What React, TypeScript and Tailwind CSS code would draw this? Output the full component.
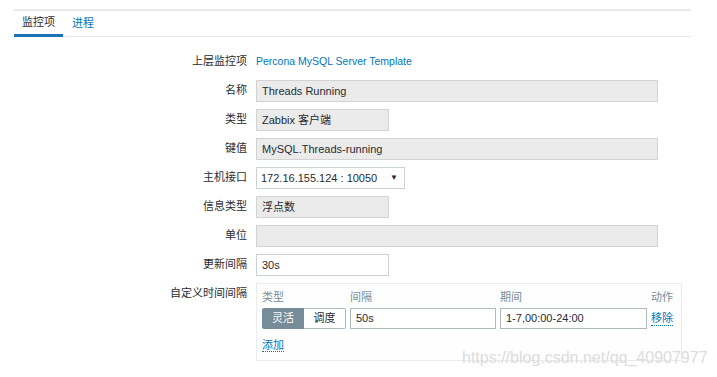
import React from "react";

const font = { fontFamily: '"Liberation Sans", Arial, "Noto Sans CJK SC", sans-serif' };

function Label({ children }: { children: React.ReactNode }) {
  return (
    <div className="w-[242px] shrink-0 pr-[9px] text-right text-[11px] text-[#1f2c33] leading-[21px]">
      {children}
    </div>
  );
}

function RO({ w, children }: { w: string; children?: React.ReactNode }) {
  return (
    <div
      className={`${w} h-[22px] border border-[#d3d3d3] bg-[#ebebeb] px-[5px] text-[11px] leading-[20px] text-[#1f2c33]`}
    >
      {children}
    </div>
  );
}

export default function App() {
  return (
    <div className="relative h-[377px] w-[717px] overflow-hidden bg-white" style={font}>
      <div className="ml-[14px] mt-[9px] w-[677px] border-t-2 border-[#e8e8e8]">
        {/* tabs */}
        <div className="flex h-[26px] items-end border-b border-[#e8e8e8]">
          <div className="-mb-px flex h-[27px] w-[49px] items-center justify-center border-b-[3px] border-[#1a73b7] text-[11px] text-[#1f2c33]">
            监控项
          </div>
          <div className="flex h-[26px] items-center pl-[9px] pt-[1px] text-[11px] text-[#0275b8]">进程</div>
        </div>

        {/* form */}
        <div className="mt-[14px] flex flex-col gap-[7px]">
          <div className="flex">
            <Label>上层监控项</Label>
            <div className="text-[10.5px] leading-[21px] text-[#0275b8]">Percona MySQL Server Template</div>
          </div>
          <div className="mt-[1px] flex">
            <Label>名称</Label>
            <RO w="w-[402px]">Threads Running</RO>
          </div>
          <div className="flex">
            <Label>类型</Label>
            <RO w="w-[133px]">Zabbix 客户端</RO>
          </div>
          <div className="flex">
            <Label>键值</Label>
            <RO w="w-[402px]">MySQL.Threads-running</RO>
          </div>
          <div className="flex">
            <Label>主机接口</Label>
            <div className="flex h-[22px] w-[149px] items-center justify-between border border-[#c9d3d8] bg-white pl-[4px] pr-[6px] text-[11px] text-[#1f2c33]">
              <span>172.16.155.124 : 10050</span>
              <span className="text-[8px]">▼</span>
            </div>
          </div>
          <div className="flex">
            <Label>信息类型</Label>
            <RO w="w-[133px]">浮点数</RO>
          </div>
          <div className="flex">
            <Label>单位</Label>
            <RO w="w-[402px]" />
          </div>
          <div className="flex">
            <Label>更新间隔</Label>
            <div className="h-[22px] w-[133px] border border-[#c9d3d8] bg-white px-[5px] text-[11px] leading-[20px] text-[#1f2c33]">
              30s
            </div>
          </div>
          <div className="flex">
            <Label>自定义时间间隔</Label>
            <div className="h-[78px] w-[426px] border border-[#ebebeb] bg-[#fefefe] px-[5px] pt-[5px]">
              <div className="grid grid-cols-[84px_146px_147px_auto] gap-x-[4px] text-[11px]">
                <div className="h-[19px] leading-[17px] text-[#768d99]">类型</div>
                <div className="h-[19px] leading-[17px] text-[#768d99]">间隔</div>
                <div className="h-[19px] leading-[17px] text-[#768d99]">期间</div>
                <div className="h-[19px] leading-[17px] text-[#768d99]">动作</div>

                <div className="flex h-[21px]">
                  <div className="flex w-[42px] items-center justify-center rounded-l-[2px] bg-[#768d99] text-white">灵活</div>
                  <div className="flex w-[42px] items-center justify-center rounded-r-[2px] border border-l-0 border-[#acbbc2] bg-white text-[#1f2c33]">
                    调度
                  </div>
                </div>
                <div className="h-[21px] border border-[#acbbc2] bg-white px-[5px] leading-[19px] text-[#1f2c33]">50s</div>
                <div className="h-[21px] border border-[#acbbc2] bg-white px-[5px] leading-[19px] text-[#1f2c33]">1-7,00:00-24:00</div>
                <div className="flex h-[21px] items-center">
                  <span className="border-b border-dotted border-[#0275b8] leading-[13px] text-[#0275b8]">移除</span>
                </div>
              </div>
              <div className="mt-[3px]">
                <span className="border-b border-dotted border-[#0275b8] text-[11px] leading-[13px] text-[#0275b8]">添加</span>
              </div>
            </div>
          </div>
        </div>
      </div>

      <div className="pointer-events-none absolute left-[462px] top-[348px] text-[16px] leading-[20px] text-[#dcdcdc]">
        https://blog.csdn.net/qq_40907977
      </div>
    </div>
  );
}
